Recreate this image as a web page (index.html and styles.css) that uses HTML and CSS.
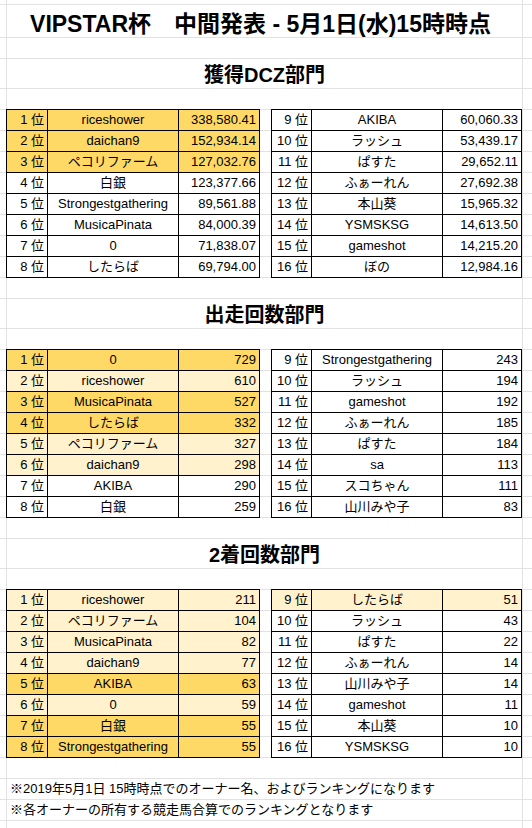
FILE: index.html
```html
<!DOCTYPE html>
<html lang="ja">
<head>
  <meta charset="UTF-8"/>
  <meta name="viewport" content="width=device-width, initial-scale=1"/>
  <title>VIPSTAR杯 中間発表</title>
  <link rel="stylesheet" href="styles.css">
</head>
<body>
  <div class="sheet">
    <div class="line top"></div>
    <div class="line title">VIPSTAR杯　中間発表 - 5月1日(水)15時時点</div>
    <div class="line blank"></div>

    <!-- 獲得DCZ -->
    <div class="line section">獲得DCZ部門</div>
    <div class="spacer"></div>
    <div class="board">
      <div class="rank-table left">
        <div class="tr gold"><div class="rank">1 位</div><div class="name">riceshower</div><div class="num">338,580.41</div></div>
        <div class="tr gold"><div class="rank">2 位</div><div class="name">daichan9</div><div class="num">152,934.14</div></div>
        <div class="tr gold"><div class="rank">3 位</div><div class="name">ペコリファーム</div><div class="num">127,032.76</div></div>
        <div class="tr"><div class="rank">4 位</div><div class="name">白銀</div><div class="num">123,377.66</div></div>
        <div class="tr"><div class="rank">5 位</div><div class="name">Strongestgathering</div><div class="num">89,561.88</div></div>
        <div class="tr"><div class="rank">6 位</div><div class="name">MusicaPinata</div><div class="num">84,000.39</div></div>
        <div class="tr"><div class="rank">7 位</div><div class="name">0</div><div class="num">71,838.07</div></div>
        <div class="tr"><div class="rank">8 位</div><div class="name">したらば</div><div class="num">69,794.00</div></div>
      </div>
      <div class="rank-table right">
        <div class="tr"><div class="rank">9 位</div><div class="name">AKIBA</div><div class="num">60,060.33</div></div>
        <div class="tr"><div class="rank">10 位</div><div class="name">ラッシュ</div><div class="num">53,439.17</div></div>
        <div class="tr"><div class="rank">11 位</div><div class="name">ぱすた</div><div class="num">29,652.11</div></div>
        <div class="tr"><div class="rank">12 位</div><div class="name">ふぁーれん</div><div class="num">27,692.38</div></div>
        <div class="tr"><div class="rank">13 位</div><div class="name">本山葵</div><div class="num">15,965.32</div></div>
        <div class="tr"><div class="rank">14 位</div><div class="name">YSMSKSG</div><div class="num">14,613.50</div></div>
        <div class="tr"><div class="rank">15 位</div><div class="name">gameshot</div><div class="num">14,215.20</div></div>
        <div class="tr"><div class="rank">16 位</div><div class="name">ぼの</div><div class="num">12,984.16</div></div>
      </div>
    </div>
    <div class="line blank"></div>

    <!-- 出走回数 -->
    <div class="line section">出走回数部門</div>
    <div class="spacer"></div>
    <div class="board">
      <div class="rank-table left">
        <div class="tr gold"><div class="rank">1 位</div><div class="name">0</div><div class="num">729</div></div>
        <div class="tr cream"><div class="rank">2 位</div><div class="name">riceshower</div><div class="num">610</div></div>
        <div class="tr gold"><div class="rank">3 位</div><div class="name">MusicaPinata</div><div class="num">527</div></div>
        <div class="tr gold"><div class="rank">4 位</div><div class="name">したらば</div><div class="num">332</div></div>
        <div class="tr cream"><div class="rank">5 位</div><div class="name">ペコリファーム</div><div class="num">327</div></div>
        <div class="tr cream"><div class="rank">6 位</div><div class="name">daichan9</div><div class="num">298</div></div>
        <div class="tr"><div class="rank">7 位</div><div class="name">AKIBA</div><div class="num">290</div></div>
        <div class="tr"><div class="rank">8 位</div><div class="name">白銀</div><div class="num">259</div></div>
      </div>
      <div class="rank-table right">
        <div class="tr"><div class="rank">9 位</div><div class="name">Strongestgathering</div><div class="num">243</div></div>
        <div class="tr"><div class="rank">10 位</div><div class="name">ラッシュ</div><div class="num">194</div></div>
        <div class="tr"><div class="rank">11 位</div><div class="name">gameshot</div><div class="num">192</div></div>
        <div class="tr"><div class="rank">12 位</div><div class="name">ふぁーれん</div><div class="num">185</div></div>
        <div class="tr"><div class="rank">13 位</div><div class="name">ぱすた</div><div class="num">184</div></div>
        <div class="tr"><div class="rank">14 位</div><div class="name">sa</div><div class="num">113</div></div>
        <div class="tr"><div class="rank">15 位</div><div class="name">スコちゃん</div><div class="num">111</div></div>
        <div class="tr"><div class="rank">16 位</div><div class="name">山川みや子</div><div class="num">83</div></div>
      </div>
    </div>
    <div class="line blank"></div>

    <!-- 2着回数 -->
    <div class="line section">2着回数部門</div>
    <div class="spacer"></div>
    <div class="board">
      <div class="rank-table left">
        <div class="tr cream"><div class="rank">1 位</div><div class="name">riceshower</div><div class="num">211</div></div>
        <div class="tr cream"><div class="rank">2 位</div><div class="name">ペコリファーム</div><div class="num">104</div></div>
        <div class="tr cream"><div class="rank">3 位</div><div class="name">MusicaPinata</div><div class="num">82</div></div>
        <div class="tr cream"><div class="rank">4 位</div><div class="name">daichan9</div><div class="num">77</div></div>
        <div class="tr gold"><div class="rank">5 位</div><div class="name">AKIBA</div><div class="num">63</div></div>
        <div class="tr cream"><div class="rank">6 位</div><div class="name">0</div><div class="num">59</div></div>
        <div class="tr gold"><div class="rank">7 位</div><div class="name">白銀</div><div class="num">55</div></div>
        <div class="tr gold"><div class="rank">8 位</div><div class="name">Strongestgathering</div><div class="num">55</div></div>
      </div>
      <div class="rank-table right">
        <div class="tr cream"><div class="rank">9 位</div><div class="name">したらば</div><div class="num">51</div></div>
        <div class="tr"><div class="rank">10 位</div><div class="name">ラッシュ</div><div class="num">43</div></div>
        <div class="tr"><div class="rank">11 位</div><div class="name">ぱすた</div><div class="num">22</div></div>
        <div class="tr"><div class="rank">12 位</div><div class="name">ふぁーれん</div><div class="num">14</div></div>
        <div class="tr"><div class="rank">13 位</div><div class="name">山川みや子</div><div class="num">14</div></div>
        <div class="tr"><div class="rank">14 位</div><div class="name">gameshot</div><div class="num">11</div></div>
        <div class="tr"><div class="rank">15 位</div><div class="name">本山葵</div><div class="num">10</div></div>
        <div class="tr"><div class="rank">16 位</div><div class="name">YSMSKSG</div><div class="num">10</div></div>
      </div>
    </div>
    <div class="line blank"></div>

    <div class="line note">※2019年5月1日 15時時点でのオーナー名、およびランキングになります</div>
    <div class="line note">※各オーナーの所有する競走馬合算でのランキングとなります</div>
    <div class="line blank"></div>
  </div>
</body>
</html>
```

FILE: styles.css
```css
*, *::before, *::after { box-sizing: border-box; margin: 0; padding: 0; }
html, body { background: #fff; }
body {
  font-family: "Liberation Sans", "Noto Sans CJK JP", sans-serif;
  font-size: 13px; color: #000;
}

/* sheet with its two visible column gridlines */
.sheet {
  width: 532px; height: 828px; overflow: hidden;
  background: linear-gradient(to right,
    transparent 6px, #e2e2e2 6px 7px,
    transparent 7px 522px, #e2e2e2 522px 523px, transparent 523px);
}

.line { border-bottom: 1px solid #e2e2e2; height: 21px; }
.line.top { height: 5px; }
.line.title {
  height: 33px; display: flex; align-items: center; justify-content: center;
  padding: 1px 18px 0 7px; font-size: 23px; font-weight: bold; white-space: nowrap;
}
.line.section {
  height: 30px; display: flex; align-items: center; justify-content: center;
  padding: 0 10px 0 7px; font-size: 20px; font-weight: bold;
}
.line.note { padding-left: 10px; line-height: 20px; white-space: nowrap; }
.spacer { height: 20px; }

/* two ranking tables on the row gridlines */
.board {
  display: flex; gap: 11px; padding-left: 6px; height: 169px;
  background: repeating-linear-gradient(to bottom, #e2e2e2 0 1px, transparent 1px 21px);
}
.rank-table { border-top: 1px solid #000; border-left: 1px solid #000; background: #fff; }
.rank-table.left { --cols: 41px 131px 81px; }
.rank-table.right { --cols: 40px 131px 79px; }
.tr {
  display: grid; grid-template-columns: var(--cols);
  height: 21px; border-bottom: 1px solid #000; line-height: 20px;
}
.tr.gold { background: #ffd966; }
.tr.cream { background: #fff2cc; }
.tr > div { border-right: 1px solid #000; white-space: nowrap; overflow: hidden; }
.rank { text-align: right; padding-right: 3px; }
.name { text-align: center; }
.num { text-align: right; padding-right: 3px; }
```
